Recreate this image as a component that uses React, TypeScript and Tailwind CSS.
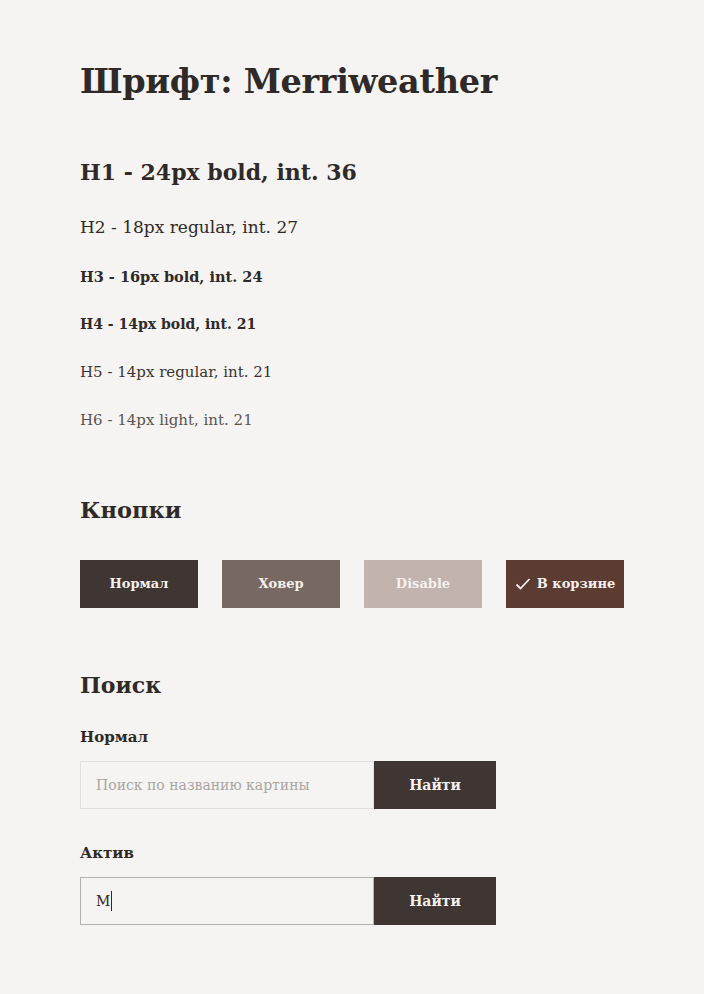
import React from "react";

const serif = { fontFamily: '"DejaVu Serif", "Liberation Serif", serif' };

export default function App() {
  return (
    <div className="min-h-[994px] w-full bg-[#f5f4f2] text-[#2f2a28]" style={serif}>
      <div className="flex flex-col px-[80px] pt-[58px] pb-[69px]">
        <h1 className="text-[33.5px] font-bold leading-[48px] tracking-[-0.3px]">Шрифт: Merriweather</h1>

        <div className="mt-[48px] text-[22px] font-bold leading-[36px]">H1 - 24px bold, int. 36</div>
        <div className="mt-[24px] text-[17px] leading-[27px]">H2 - 18px regular, int. 27</div>
        <div className="mt-[24px] text-[14.5px] font-bold leading-[24px]">H3 - 16px bold, int. 24</div>
        <div className="mt-[25px] text-[14px] font-bold leading-[21px]">H4 - 14px bold, int. 21</div>
        <div className="mt-[27px] text-[15px] leading-[21px] text-[#3a3532]">H5 - 14px regular, int. 21</div>
        <div className="mt-[27px] text-[15px] leading-[21px] text-[#5a5451]">H6 - 14px light, int. 21</div>

        <h2 className="mt-[61px] text-[22.5px] font-bold leading-[36px]">Кнопки</h2>
        <div className="mt-[32px] flex gap-[24px]">
          <button className="flex h-[48px] w-[118px] items-center justify-center bg-[#3f3532] text-[13px] font-bold text-[#f5f1ee]">Нормал</button>
          <button className="flex h-[48px] w-[118px] items-center justify-center bg-[#786862] text-[13px] font-bold text-[#f5f1ee]">Ховер</button>
          <button className="flex h-[48px] w-[118px] items-center justify-center bg-[#c2b3ae] text-[13px] font-bold text-[#f5f1ee]">Disable</button>
          <button className="flex h-[48px] w-[118px] items-center justify-center gap-[6px] bg-[#5c3b32] text-[13px] font-bold text-[#f5f1ee]">
            <svg width="16" height="14" viewBox="0 0 16 14" fill="none">
              <path d="M1.5 7.5 L5.5 11.5 L14.5 2" stroke="#f5f1ee" strokeWidth="1.8" />
            </svg>
            В корзине
          </button>
        </div>

        <h2 className="mt-[59px] text-[22px] font-bold leading-[36px]">Поиск</h2>
        <div className="mt-[22px] text-[15px] font-bold leading-[24px]">Нормал</div>
        <div className="mt-[12px] flex h-[48px] w-[416px]">
          <div className="flex h-full w-[294px] items-center border border-[#e2dfdc] bg-[#f5f4f2] pl-[15px] text-[14px] text-[#aaa5a2]">
            Поиск по названию картины
          </div>
          <button className="flex h-full w-[122px] items-center justify-center bg-[#3f3532] text-[14px] font-bold text-[#f5f1ee]">Найти</button>
        </div>
        <div className="mt-[32px] text-[15px] font-bold leading-[24px]">Актив</div>
        <div className="mt-[12px] flex h-[48px] w-[416px]">
          <div className="flex h-full w-[294px] items-center border border-[#b3b0ae] bg-[#f5f4f2] pl-[15px] text-[14px] text-[#2f2a28]">
            М<span className="ml-[1px] inline-block h-[20px] w-[1px] bg-[#2f2a28]" />
          </div>
          <button className="flex h-full w-[122px] items-center justify-center bg-[#3f3532] text-[14px] font-bold text-[#f5f1ee]">Найти</button>
        </div>
      </div>
    </div>
  );
}
